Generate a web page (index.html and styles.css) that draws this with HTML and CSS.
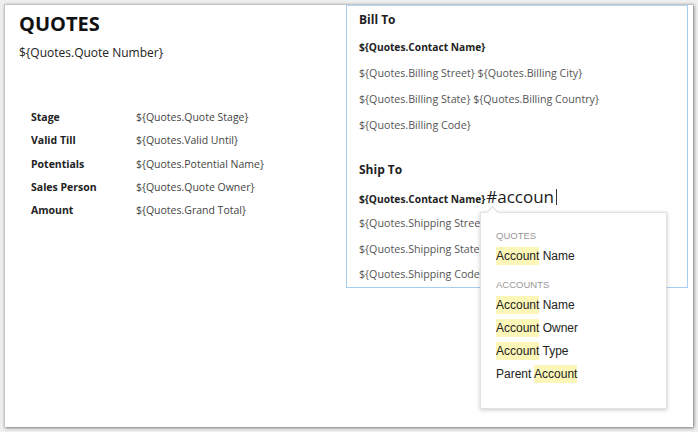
FILE: index.html
```html
<!DOCTYPE html>
<html>
<head>
<meta charset="utf-8">
<link rel="stylesheet" href="styles.css">
</head>
<body>
<div class="frame">
  <div class="left">
    <div class="title">QUOTES</div>
    <div class="number">${Quotes.Quote Number}</div>
    <div class="table">
      <div class="row"><span class="lbl">Stage</span><span class="val">${Quotes.Quote Stage}</span></div>
      <div class="row"><span class="lbl">Valid Till</span><span class="val">${Quotes.Valid Until}</span></div>
      <div class="row"><span class="lbl">Potentials</span><span class="val">${Quotes.Potential Name}</span></div>
      <div class="row"><span class="lbl">Sales Person</span><span class="val">${Quotes.Quote Owner}</span></div>
      <div class="row"><span class="lbl">Amount</span><span class="val">${Quotes.Grand Total}</span></div>
    </div>
  </div>
  <div class="addr">
    <div class="head">Bill To</div>
    <div class="line contact">${Quotes.Contact Name}</div>
    <div class="line">${Quotes.Billing Street} ${Quotes.Billing City}</div>
    <div class="line">${Quotes.Billing State} ${Quotes.Billing Country}</div>
    <div class="line">${Quotes.Billing Code}</div>
    <div class="head ship">Ship To</div>
    <div class="line contact">${Quotes.Contact Name}<span class="typed">#accoun</span><span class="cursor"></span></div>
    <div class="line">${Quotes.Shipping Street}</div>
    <div class="line">${Quotes.Shipping State}</div>
    <div class="line last">${Quotes.Shipping Code}</div>
  </div>
  <div class="popup">
    <div class="sec">QUOTES</div>
    <div class="item"><span class="hl">Account</span> Name</div>
    <div class="sec sec2">ACCOUNTS</div>
    <div class="item"><span class="hl">Account</span> Name</div>
    <div class="item"><span class="hl">Account</span> Owner</div>
    <div class="item"><span class="hl">Account</span> Type</div>
    <div class="item">Parent <span class="hl">Account</span></div>
  </div>
</div>
</body>
</html>
```
FILE: styles.css
```css
html, body {
  margin: 0;
  padding: 0;
  background: #efefef;
}
body {
  width: 698px;
  height: 432px;
  overflow: hidden;
  font-family: "Open Sans", "Liberation Sans", sans-serif;
}
.frame {
  position: relative;
  margin: 4px 0 0 4px;
  width: 688px;
  height: 422px;
  background: #fff;
  border-left: 1px solid #c4c4c4;
  border-top: 1px solid #c4c4c4;
  box-shadow: 1px 1px 3px rgba(0,0,0,0.5);
  display: flex;
  align-items: flex-start;
}
.left {
  width: 327px;
  padding-left: 14px;
}
.title {
  margin-top: 6px;
  font-size: 20px;
  line-height: 26px;
  font-weight: 700;
  color: #111;
}
.number {
  margin-top: 8px;
  font-size: 12px;
  line-height: 16px;
  color: #222;
}
.table {
  margin-top: 45px;
  padding-left: 12px;
}
.row {
  display: flex;
  height: 23.25px;
  line-height: 23px;
  font-size: 10.5px;
}
.lbl {
  width: 105px;
  font-weight: 700;
  color: #222;
}
.val {
  color: #444;
}
.addr {
  width: 328px;
  border: 1px solid #a8cdf2;
  border-top: 1px solid #b8d8f5;
  padding: 1px 0 0 12px;
  font-size: 10.7px;
  color: #555;
}
.head {
  font-size: 12px;
  font-weight: 700;
  line-height: 26px;
  color: #222;
}
.ship {
  margin-top: 19px;
}
.line {
  line-height: 26px;
  height: 26px;
  white-space: nowrap;
}
.line.last {
  height: 25px;
  line-height: 25px;
}
.contact {
  font-size: 10.2px;
  font-weight: 700;
  color: #222;
  margin-top: 1px;
}
.typed {
  font-weight: 400;
  font-size: 17px;
  color: #1a1a1a;
  margin-left: 1px;
}
.cursor {
  display: inline-block;
  width: 1px;
  height: 16px;
  background: #333;
  margin-left: 2px;
  vertical-align: -2px;
}
.popup {
  position: absolute;
  left: 475px;
  top: 207px;
  width: 170px;
  height: 179px;
  padding: 16px 0 0 15px;
  background: #fff;
  border: 1px solid #e2e2e2;
  box-shadow: 0 1px 4px rgba(0,0,0,0.22);
  font-family: "Liberation Sans", Arial, sans-serif;
}
.popup::before {
  content: "";
  position: absolute;
  left: 7px;
  top: -5px;
  width: 8px;
  height: 8px;
  background: #fff;
  border-left: 1px solid #dcdcdc;
  border-top: 1px solid #dcdcdc;
  transform: rotate(45deg);
}
.sec {
  font-size: 9.5px;
  line-height: 14px;
  color: #999;
  margin-bottom: 2px;
}
.sec2 {
  margin-top: 10px;
  margin-bottom: 2px;
}
.item {
  font-size: 12px;
  line-height: 23px;
  height: 23px;
  color: #222;
}
.hl {
  background: #fcf6b8;
  padding: 2px 0;
}
```
